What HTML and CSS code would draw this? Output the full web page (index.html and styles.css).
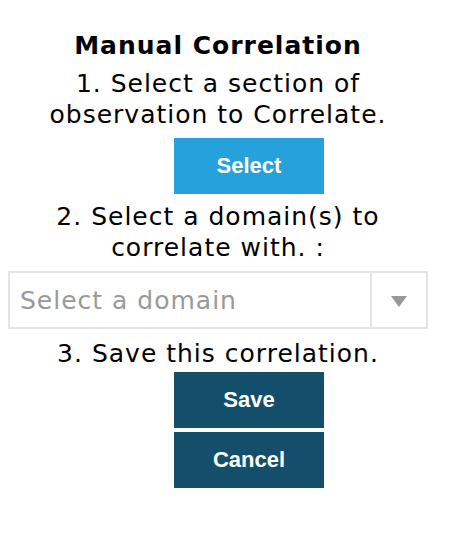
FILE: index.html
```html
<!DOCTYPE html>
<html>
<head>
<meta charset="utf-8">
<link rel="stylesheet" href="styles.css">
</head>
<body>
<div class="panel">
  <h3 class="title">Manual Correlation</h3>
  <p class="step step-1">1. Select a section of observation to Correlate.</p>
  <button class="btn btn-select">Select</button>
  <p class="step step-2">2. Select a domain(s) to correlate with. :</p>
  <div class="dropdown">
    <span class="placeholder">Select a domain</span>
    <span class="arrow-box"><span class="arrow"></span></span>
  </div>
  <p class="step step-3">3. Save this correlation.</p>
  <button class="btn btn-dark btn-save">Save</button>
  <button class="btn btn-dark btn-cancel">Cancel</button>
</div>
</body>
</html>
```
FILE: styles.css
```css
html, body {
  margin: 0;
  padding: 0;
  background: #fff;
}
body {
  padding: 0 8px;
  font-family: "DejaVu Sans", Verdana, sans-serif;
  color: #000;
}
.panel {
  width: 420px;
  text-align: center;
}
.title {
  margin: 0;
  padding-top: 30px;
  font-size: 25px;
  line-height: 31px;
  font-weight: bold;
  letter-spacing: 1px;
}
.step {
  margin: 0;
  font-size: 25px;
  line-height: 31px;
  letter-spacing: 1px;
}
.step-1 { margin-top: 7px; }
.step-2 { margin-top: 7px; }
.step-3 { margin-top: 9px; }
.btn {
  display: block;
  width: 150px;
  height: 56px;
  margin-left: 166px;
  border: 0;
  border-radius: 0;
  color: #fff;
  font-family: "Liberation Sans", Arial, sans-serif;
  font-weight: bold;
  font-size: 22px;
  padding: 0;
}
.btn-select {
  margin-top: 8px;
  background: #27a1db;
}
.btn-dark {
  background: #134f6a;
}
.btn-save { margin-top: 3px; }
.btn-cancel { margin-top: 4px; }
.dropdown {
  margin-top: 8px;
  height: 58px;
  box-sizing: border-box;
  border: 2px solid #e4e4e4;
  display: flex;
  align-items: stretch;
  text-align: left;
}
.placeholder {
  flex: 1;
  display: flex;
  align-items: center;
  padding-left: 10px;
  font-size: 25px;
  letter-spacing: 1px;
  color: #999;
}
.arrow-box {
  width: 54px;
  border-left: 2px solid #e4e4e4;
  display: flex;
  align-items: center;
  justify-content: center;
}
.arrow {
  width: 0;
  height: 0;
  border-left: 8px solid transparent;
  border-right: 8px solid transparent;
  border-top: 11px solid #999;
  margin-top: 2px;
}
```
